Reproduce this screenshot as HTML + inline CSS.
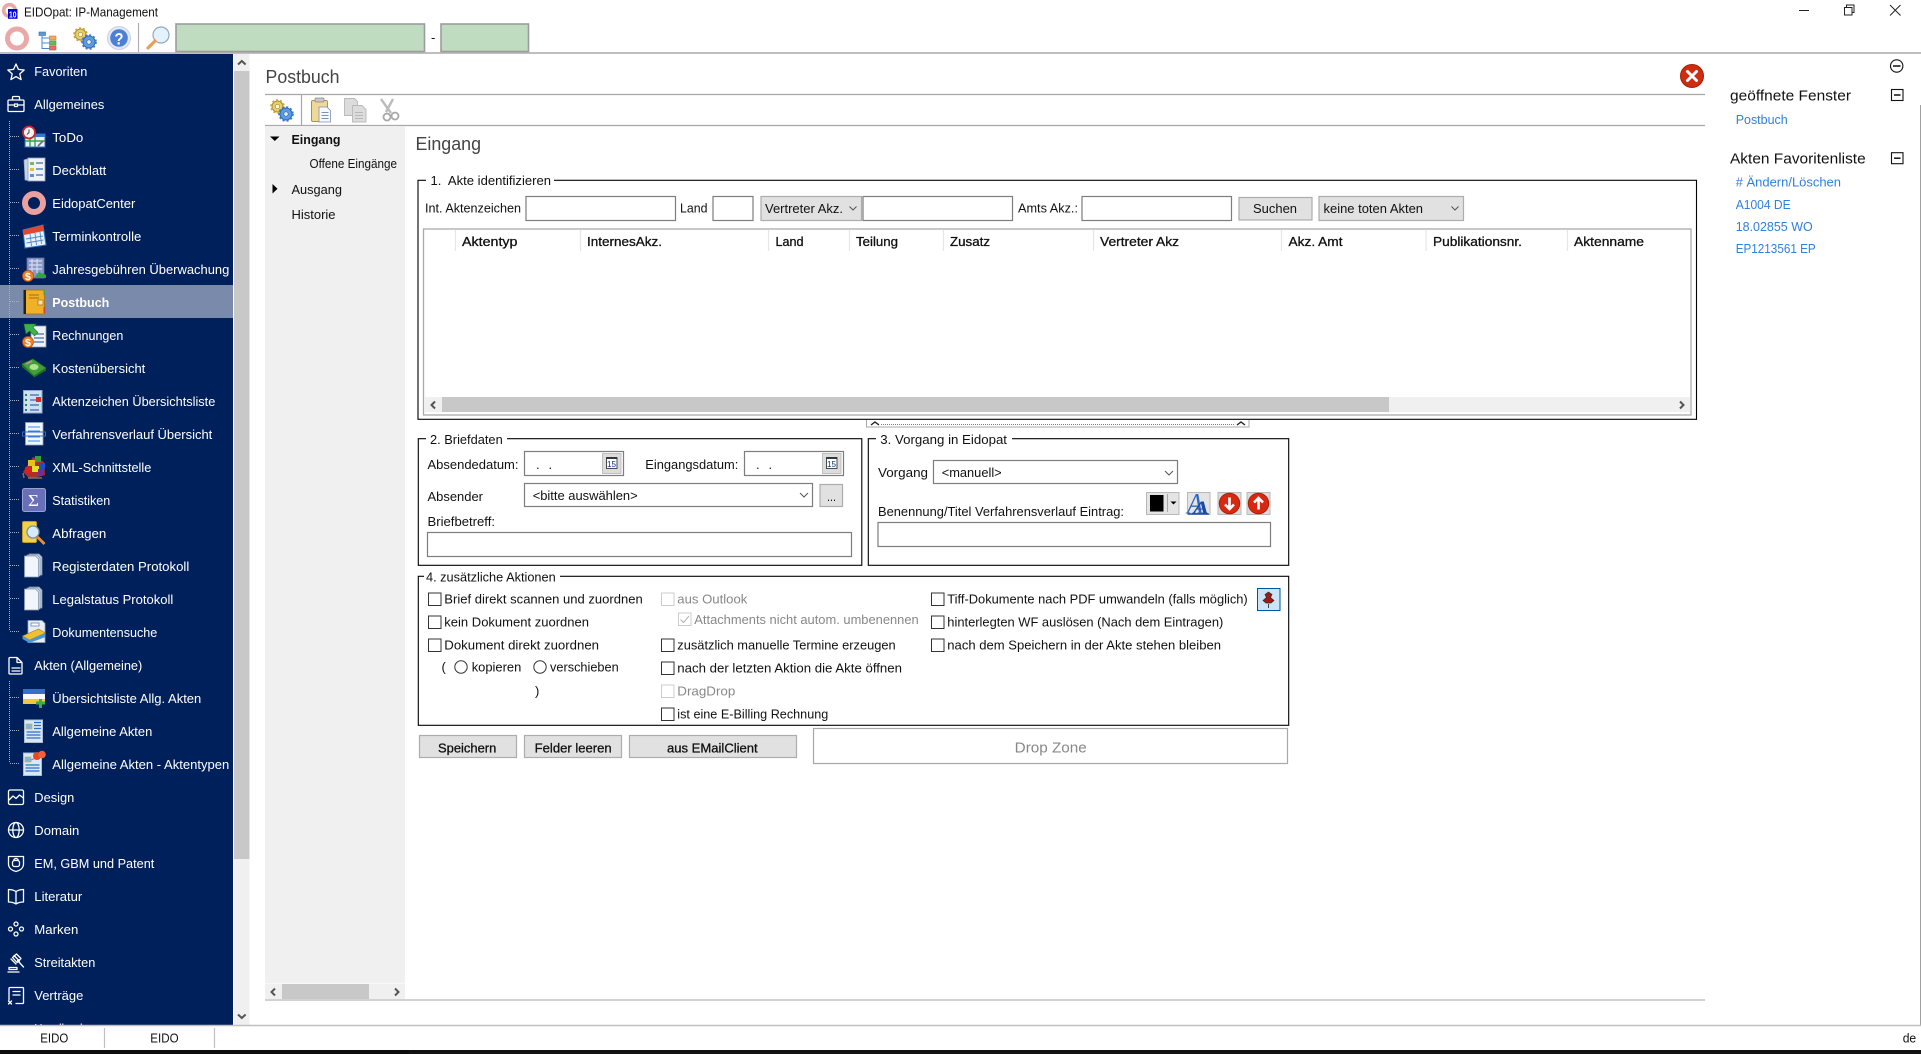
<!DOCTYPE html>
<html lang="de"><head><meta charset="utf-8"><title>EIDOpat: IP-Management</title>
<style>
html,body{margin:0;padding:0;background:#fff;overflow:hidden}
svg{display:block;font-family:"Liberation Sans",sans-serif;font-size:13px}
text{fill:#111;white-space:pre}
.w text,text.w{fill:#fff}
.b{stroke:#111;stroke-width:.3}
.g{fill:#888}
.l{fill:#2f7fe0}
.h{font-size:18px;fill:#444}
.s{font-size:15px}
.i{fill:#fff;stroke:#7d7d7d;stroke-width:1.2}
.btn{fill:#e1e1e1;stroke:#adadad;stroke-width:1.2}
.f{fill:none;stroke:#000;stroke-width:1.1}
.c{fill:#fff;stroke:#333;stroke-width:1}
.d{fill:#fff;stroke:#ccc;stroke-width:1}
.lw{fill:none;stroke:#fff;stroke-width:1.3;stroke-linejoin:round;stroke-linecap:round}
.chev{fill:none;stroke:#555;stroke-width:1}
.arr{fill:none;stroke:#555;stroke-width:2}
</style></head><body>
<svg xmlns="http://www.w3.org/2000/svg" width="1921" height="1054" viewBox="0 0 1921 1054">
<defs>
<g id="gears">
 <circle cx="7.5" cy="7.5" r="5.5" fill="#e8cc70" stroke="#a08a30" stroke-width="1"/><circle cx="7.5" cy="7.5" r="6.3" fill="none" stroke="#c8a840" stroke-width="2" stroke-dasharray="2 2"/><circle cx="7.5" cy="7.5" r="2.2" fill="#fff6d0" stroke="#a08a30" stroke-width=".7"/>
 <circle cx="16" cy="15" r="6" fill="#5c9ce0" stroke="#2c60a8" stroke-width="1"/><circle cx="16" cy="15" r="6.8" fill="none" stroke="#3c78c8" stroke-width="2" stroke-dasharray="2 2"/><circle cx="16" cy="15" r="2.2" fill="#e4f0fc" stroke="#2c60a8" stroke-width=".7"/>
</g>
<g id="pages">
 <path d="M6 1h10l3 3v18H6z" fill="#b8c8dc" stroke="#8898b0" stroke-width=".7"/><path d="M4 2h10l3 3v18H4z" fill="#d8e4f0" stroke="#8898b0" stroke-width=".7"/><path d="M1.500 3h11l3 3v18h-14z" fill="#f2f6fc" stroke="#8898b0" stroke-width=".8"/>
</g>
<g id="cal">
 <rect x=".5" y=".5" width="18.500" height="20" fill="#dcdcdc" stroke="#c0c0c0"/><rect x="4.500" y="4.500" width="10.500" height="11" fill="#fff" stroke="#222" stroke-width=".8"/><rect x="4.500" y="4.500" width="10.500" height="1.400" fill="#222"/>
</g>
<g id="coin"><circle cx="6" cy="6" r="5.500" fill="#f08020" stroke="#b85010" stroke-width=".7"/><text x="3" y="10" font-size="10.500" font-weight="bold" style="fill:#fff">$</text></g>
</defs>

<!-- Title bar -->
<rect width="1921" height="1054" fill="#fff"/>
<circle cx="9.500" cy="10.500" r="5.800" fill="none" stroke="#e8a8a8" stroke-width="3.600"/>
<rect x="8" y="9" width="9.500" height="9.800" fill="#0000e0"/>
<text x="9" y="17.300" font-size="8.500" font-weight="bold" textLength="7.500" lengthAdjust="spacingAndGlyphs" style="fill:#fff">10</text>
<text x="24" y="16.300" textLength="134" lengthAdjust="spacingAndGlyphs">EIDOpat: IP-Management</text>
<path d="M1799 10.500h10" stroke="#222" stroke-width="1"/>
<path d="M1844.500 7.500h7.500v7.500h-7.500zM1846.500 7.500v-2.500h7.500v7.500h-2" fill="none" stroke="#222" stroke-width="1"/>
<path d="M1890 5l10.500 10.500M1900.500 5L1890 15.500" stroke="#222" stroke-width="1"/>

<!-- Toolbar -->
<circle cx="17" cy="38.500" r="9.500" fill="none" stroke="#eaa8a8" stroke-width="5"/>
<g stroke-width=".6">
 <path d="M42 36v12.500h7.500M42 38h7.500M42 43h7.500" fill="none" stroke="#4888d0" stroke-width="1"/>
 <rect x="39" y="32" width="6.500" height="3.500" fill="#5a98dc" stroke="#3870b0"/>
 <rect x="49.500" y="36" width="6.500" height="4" fill="#f0a860" stroke="#c08040"/>
 <rect x="49.500" y="41" width="6.500" height="4" fill="#70b860" stroke="#509040"/>
 <rect x="49.500" y="46" width="6.500" height="4" fill="#e87060" stroke="#b05040"/>
</g>
<use href="#gears" x="73" y="27"/>
<circle cx="119" cy="38" r="11.500" fill="#e2e8f6" stroke="#c8d0e4"/>
<circle cx="119" cy="38" r="8.800" fill="#4c80d4"/>
<text x="114.500" y="44.500" font-size="17" font-weight="bold" textLength="9" lengthAdjust="spacingAndGlyphs" style="fill:#fff">?</text>
<path d="M138.500 23v29" stroke="#b0b0b0" stroke-width="1.200"/>
<circle cx="161" cy="35" r="8" fill="#e4f2fc" stroke="#90a8c4" stroke-width="1.200"/>
<path d="M155 41l-7 7" stroke="#e8a050" stroke-width="3.200" stroke-linecap="round"/>
<rect x="176" y="24" width="248.500" height="27.500" fill="#bfdcc0" stroke="#9c9c9c" stroke-width="1.600"/>
<text x="431" y="42">-</text>
<rect x="441" y="24" width="87.500" height="27.500" fill="#bfdcc0" stroke="#9c9c9c" stroke-width="1.600"/>
<path d="M0 53h1921" stroke="#a8a8a8" stroke-width="1.400"/>

<!-- Sidebar -->
<rect x="0" y="54" width="233" height="972" fill="#00205c"/>
<rect x="0" y="285" width="233" height="33" fill="#7a8aab"/>
<rect x="234" y="54" width="15.500" height="972" fill="#f0f0f0"/>
<rect x="234" y="71" width="15.500" height="788" fill="#c8c8c8"/>
<path d="M238 64.500l3.800-3.500 3.800 3.500" class="arr"/>
<path d="M238 1014.500l3.800 3.500 3.800-3.500" class="arr"/>

<g stroke="#a8b0c4" stroke-width="1" stroke-dasharray="1 1" fill="none">
 <path d="M9.500 121V631M9.500 681V763"/>
 <path d="M10 136.500h9M10 169.500h9M10 202.500h9M10 235.500h9M10 268.500h9M10 301.500h9M10 334.500h9M10 367.500h9M10 400.500h9M10 433.500h9M10 466.500h9M10 499.500h9M10 532.500h9M10 565.500h9M10 598.500h9M10 631.500h9M10 697.500h9M10 730.500h9M10 763.500h9"/>
</g>

<g class="w">
<text x="34.300" y="76" textLength="53" lengthAdjust="spacingAndGlyphs">Favoriten</text>
<text x="34.300" y="109" textLength="70" lengthAdjust="spacingAndGlyphs">Allgemeines</text>
<text x="52.300" y="142" textLength="31" lengthAdjust="spacingAndGlyphs">ToDo</text>
<text x="52.300" y="175" textLength="54" lengthAdjust="spacingAndGlyphs">Deckblatt</text>
<text x="52.300" y="208" textLength="83" lengthAdjust="spacingAndGlyphs">EidopatCenter</text>
<text x="52.300" y="241" textLength="89" lengthAdjust="spacingAndGlyphs">Terminkontrolle</text>
<text x="52.300" y="274" textLength="177" lengthAdjust="spacingAndGlyphs">Jahresgebühren Überwachung</text>
<text x="52.300" y="307" textLength="57" lengthAdjust="spacingAndGlyphs" font-weight="bold">Postbuch</text>
<text x="52.300" y="340" textLength="71" lengthAdjust="spacingAndGlyphs">Rechnungen</text>
<text x="52.300" y="373" textLength="93" lengthAdjust="spacingAndGlyphs">Kostenübersicht</text>
<text x="52.300" y="406" textLength="163" lengthAdjust="spacingAndGlyphs">Aktenzeichen Übersichtsliste</text>
<text x="52.300" y="439" textLength="160" lengthAdjust="spacingAndGlyphs">Verfahrensverlauf Übersicht</text>
<text x="52.300" y="472" textLength="99" lengthAdjust="spacingAndGlyphs">XML-Schnittstelle</text>
<text x="52.300" y="505" textLength="58" lengthAdjust="spacingAndGlyphs">Statistiken</text>
<text x="52.300" y="538" textLength="54" lengthAdjust="spacingAndGlyphs">Abfragen</text>
<text x="52.300" y="571" textLength="137" lengthAdjust="spacingAndGlyphs">Registerdaten Protokoll</text>
<text x="52.300" y="604" textLength="121" lengthAdjust="spacingAndGlyphs">Legalstatus Protokoll</text>
<text x="52.300" y="637" textLength="105" lengthAdjust="spacingAndGlyphs">Dokumentensuche</text>
<text x="34.300" y="670" textLength="108" lengthAdjust="spacingAndGlyphs">Akten (Allgemeine)</text>
<text x="52.300" y="703" textLength="149" lengthAdjust="spacingAndGlyphs">Übersichtsliste Allg. Akten</text>
<text x="52.300" y="736" textLength="100" lengthAdjust="spacingAndGlyphs">Allgemeine Akten</text>
<text x="52.300" y="769" textLength="177" lengthAdjust="spacingAndGlyphs">Allgemeine Akten - Aktentypen</text>
<text x="34.300" y="802" textLength="40" lengthAdjust="spacingAndGlyphs">Design</text>
<text x="34.300" y="835" textLength="45" lengthAdjust="spacingAndGlyphs">Domain</text>
<text x="34.300" y="868" textLength="120" lengthAdjust="spacingAndGlyphs">EM, GBM und Patent</text>
<text x="34.300" y="901" textLength="48" lengthAdjust="spacingAndGlyphs">Literatur</text>
<text x="34.300" y="934" textLength="44" lengthAdjust="spacingAndGlyphs">Marken</text>
<text x="34.300" y="967" textLength="61" lengthAdjust="spacingAndGlyphs">Streitakten</text>
<text x="34.300" y="1000" textLength="49" lengthAdjust="spacingAndGlyphs">Verträge</text>
<text x="34.300" y="1033" textLength="52" lengthAdjust="spacingAndGlyphs">Handbuch</text>
</g>

<!-- top-level line icons -->
<path class="lw" d="M16 64l2.400 5.400 5.800.6-4.400 3.900 1.300 5.700-5.100-3-5.100 3 1.300-5.700-4.400-3.900 5.800-.6z"/>
<g class="lw"><rect x="8" y="100" width="16" height="11.500" rx="1"/><path d="M12.500 100v-2.500q0-1 1-1h5q1 0 1 1v2.500M8 105h6M18 105h6"/><rect x="14.500" y="104" width="3" height="2.500"/></g>
<g class="lw"><path d="M10 657.500h7l5 5v10.500q0 1-1 1H10q-1 0-1-1v-14.500q0-1 1-1zM17 657.500v5h5M12 668h8M12 671h8"/></g>
<g class="lw"><rect x="8.500" y="790" width="15" height="14.500" rx="1.500"/><path d="M9 800l4-4 3 2.500 3.500-3.500 4 3"/></g>
<g class="lw"><circle cx="16" cy="830" r="7.500"/><ellipse cx="16" cy="830" rx="3.200" ry="7.500"/><path d="M8.500 830h15"/></g>
<g class="lw"><path d="M8.500 856.500h15v7.500c0 4-3.500 6.500-7.500 7.500-4-1-7.500-3.500-7.500-7.500z"/><rect x="12.500" y="860.500" width="7" height="6" rx="2"/><path d="M14 860.500v-1q2-2 4 0v1"/></g>
<g class="lw"><path d="M16 891.500q-3-2-7.500-2v12.500q4.500 0 7.500 2 3-2 7.500-2v-12.500q-4.500 0-7.500 2zM16 891.500v12.500"/></g>
<g class="lw"><circle cx="16" cy="924" r="2"/><circle cx="16" cy="934" r="2"/><circle cx="10.500" cy="929" r="2"/><circle cx="21.500" cy="929" r="2"/></g>
<g class="lw"><path d="M14 955.500l5.500 5.500M11 959l5 5M12.500 957.500l4-3.500 4.500 4.500-4 4zM17.500 960.500l6 6.500M9 967.500h8v2H9zM8 972h11"/></g>
<g class="lw"><path d="M9 1000v-11.500q0-1 1-1h12.500q1 0 1 1V1003M13 991.500h7M13 995h7M8.500 1001l3 3M11.500 1001l-3 3M16 1003.500h7"/></g>
<path class="lw" d="M8 1033l8-6 8 6"/>

<!-- tree item icons -->
<g>
 <rect x="25" y="134" width="20" height="13" fill="#e8f2fc" stroke="#2c6cc0"/><rect x="25" y="134" width="20" height="3" fill="#3078d0"/><path d="M30 137v10M35 137v10M25 141h20" stroke="#38a048" stroke-width="1.400"/>
 <circle cx="29" cy="132.500" r="6" fill="#f4f4f4" stroke="#d02828" stroke-width="1.800"/><path d="M29 129.500v3l-2 2" stroke="#444" stroke-width="1" fill="none"/>
 <path d="M38 146l5-5" stroke="#707070" stroke-width="1.600"/>
</g>
<g>
 <path d="M24 160l6-2v23l-5-1z" fill="#c8d4e4" stroke="#90a0b8" stroke-width=".7"/>
 <rect x="28" y="158" width="17" height="23" fill="#eef4fa" stroke="#90a0b8" stroke-width=".8"/>
 <path d="M30 162h4v3h-4z" fill="#80b860"/><path d="M36 163h7M36 169h7M36 175h7" stroke="#6080b0" stroke-width="1.500"/><path d="M30 168h4v3h-4z" fill="#e0c040"/><path d="M30 174h4v3h-4z" fill="#6090d0"/>
</g>
<circle cx="34" cy="203" r="9" fill="none" stroke="#e8a0a0" stroke-width="6"/>
<g>
 <path d="M23 230l20-5 3 20-21 3z" fill="#e8f2fc" stroke="#2c78c8"/><path d="M23 230l20-5 1 6-20 4z" fill="#e04830"/>
 <path d="M26 239l17-3M26.500 243l17-3M30 234l1.500 12M35 233l1.500 12M40 232l1.500 12" stroke="#5088c8" stroke-width=".9"/>
</g>
<g>
 <rect x="27" y="258" width="17" height="20" fill="#8898c8" stroke="#687098" stroke-width=".8"/>
 <path d="M29 261h13M29 265h13M29 269h13M32 259v14M37 259v14" stroke="#d4dcf4" stroke-width="1.200"/>
 <path d="M34 278h12v-3l-7-3z" fill="#38a040"/>
 <use href="#coin" x="22" y="270"/>
</g>
<g>
 <rect x="24" y="290" width="20.500" height="24" fill="#f0b028" stroke="#a87010" stroke-width=".8"/>
 <rect x="23.500" y="290" width="2.500" height="24" fill="#202020"/>
 <path d="M29 295h10M29 298h10" stroke="#a07010"/><rect x="38" y="300" width="5" height="5" fill="#f8e0a0" stroke="#a07010" stroke-width=".7"/>
 <rect x="43.500" y="290" width="1.600" height="5" fill="#50a050"/><rect x="43.500" y="307" width="1.600" height="6" fill="#d04040"/>
</g>
<g>
 <rect x="31" y="326" width="15" height="21" fill="#eef3fa" stroke="#8898b0" stroke-width=".8"/>
 <path d="M34 334h10M34 338h10M34 342h10" stroke="#4870a8" stroke-width="1.300"/>
 <path d="M24 324h12l-3 3.500 5 5-3.500 3.500-5-5-3.500 3z" fill="#40b048" stroke="#207828" stroke-width=".6"/>
 <use href="#coin" x="22" y="336"/>
</g>
<g>
 <path d="M22 364l11-5 13 9-12 8z" fill="#3ea038" stroke="#287020" stroke-width=".7"/>
 <path d="M22 364v3l12 10v-1zM46 368v2.500l-12 7v-2z" fill="#1f7020"/>
 <ellipse cx="34" cy="367" rx="4.500" ry="3" fill="#b0e090"/><path d="M26 364l6-3" stroke="#c09090" stroke-width="2"/>
</g>
<g>
 <rect x="23.500" y="390.500" width="18.500" height="22.500" fill="#cfe0f4" stroke="#90a8c8"/>
 <path d="M30 395h9M30 400h6M30 405h9M30 410h9" stroke="#1848a8" stroke-width="1"/>
 <path d="M26 394v2M26 399v2M26 404v2M26 409v2" stroke="#109040" stroke-width="2"/>
 <rect x="36" y="397" width="5" height="5" fill="#e02828"/>
</g>
<g>
 <rect x="25.500" y="422.500" width="17.500" height="22.500" fill="#f0f6ff" stroke="#90a0b8" stroke-width=".8"/>
 <path d="M28 427h12M28 431h12M28 437h12M28 441h12" stroke="#3c8ce0" stroke-width="1.100"/>
 <rect x="22.500" y="432" width="23" height="4" fill="none" stroke="#3868b8" stroke-width="1"/>
</g>
<g>
 <path d="M23 472l10-15 11 5 1 13-15 4z" fill="#a83030"/>
 <path d="M28 460h7v6h-7z" fill="#e8c020"/><path d="M35 456h6v6h-6z" fill="#30a040"/><path d="M39 463h6v6h-6z" fill="#2050c0"/><path d="M32 466h7v6h-7z" fill="#e8e020"/><path d="M25 467h6v6h-6z" fill="#d82020"/><path d="M38 469h6v6h-6z" fill="#703090"/>
 <path d="M24 478l-1-5M28 478h14" stroke="#807060" stroke-width="1.500"/>
</g>
<g>
 <rect x="22.500" y="488.500" width="23" height="23" rx="2" fill="#6a70b8" stroke="#9aa0d0"/>
 <text x="28" y="506" font-size="17" font-family="Liberation Serif" textLength="11" lengthAdjust="spacingAndGlyphs" style="fill:#fff">Σ</text>
</g>
<g>
 <path d="M22.500 523q0-1.500 1.500-1.500h11q1.500 0 1.500 1.500v18q0 1.500-1.500 1.500H24q-1.500 0-1.500-1.500z" fill="#f0d050" stroke="#c09820"/>
 <circle cx="33" cy="532" r="6" fill="#d8eaf8" stroke="#7890a8" stroke-width="1.300"/>
 <path d="M37.500 537l7 7" stroke="#e89030" stroke-width="2.800"/>
</g>
<use href="#pages" x="23" y="553"/>
<use href="#pages" x="23" y="586"/>
<g>
 <path d="M28 620.500h14l3 3v19H28z" fill="#e8eef6" stroke="#90a0b8" stroke-width=".8"/>
 <rect x="31" y="623" width="8" height="3" fill="#fff" stroke="#6088b8" stroke-width=".8"/>
 <path d="M22.500 636l16-7 7 4-16 7z" fill="#f0c030" stroke="#a08020" stroke-width=".6"/>
 <path d="M22.500 636v3l7 4 16-6v-4l-16 7z" fill="#4898d8"/>
</g>
<g>
 <rect x="23" y="689" width="22" height="5" fill="#3470c8"/>
 <rect x="23" y="694" width="22" height="5" fill="#f8f8ff"/>
 <rect x="23" y="699" width="22" height="5" fill="#f0c838"/>
 <path d="M36 703h9M40.500 699v9" stroke="#38b048" stroke-width="3"/>
</g>
<g>
 <rect x="24.500" y="720" width="18" height="22.500" fill="#d8e8f8" stroke="#a8bcd4"/>
 <rect x="26" y="724" width="6" height="5" fill="#78b8e8" stroke="#d0b040" stroke-width=".7"/>
 <path d="M34 722.500h7M34 725.500h7M34 728.500h7M26.500 732h14M26.500 735h14M26.500 738h14" stroke="#2c70c8" stroke-width="1.200"/>
</g>
<g>
 <rect x="23.500" y="753" width="18" height="22.500" fill="#d8e8f8" stroke="#a8bcd4"/>
 <rect x="25" y="757" width="6" height="5" fill="#78b8e8" stroke="#d0b040" stroke-width=".7"/>
 <path d="M25.500 765h14M25.500 768h14M25.500 771h14" stroke="#2c70c8" stroke-width="1.200"/>
 <path d="M31 760l7-3" stroke="#888" stroke-width="1"/>
 <circle cx="37" cy="756" r="4" fill="#e84820"/><circle cx="42" cy="754.500" r="3.800" fill="#f06040"/>
</g>

<!-- Postbuch header -->
<text class="h" x="265.500" y="83" textLength="74" lengthAdjust="spacingAndGlyphs">Postbuch</text>
<circle cx="1692" cy="76" r="11.500" fill="#d02c10" stroke="#9c2008"/>
<path d="M1687.500 71.500l9 9M1696.500 71.500l-9 9" stroke="#fff" stroke-width="3" stroke-linecap="round"/>
<path d="M265 94.500h1440M265 125.500h1440" stroke="#a8a8a8" stroke-width="1.200"/>
<path d="M301.500 95v30" stroke="#a8a8a8" stroke-width="1.200"/>
<use href="#gears" x="270" y="99"/>
<g>
 <rect x="311.500" y="100.500" width="16" height="21" rx="1.500" fill="#f0d898" stroke="#b09050"/>
 <rect x="315" y="98" width="9" height="4" rx="1" fill="#c8c8c8" stroke="#888" stroke-width=".7"/>
 <path d="M319 107h8l3.500 3.500v11.500H319z" fill="#f4f8ff" stroke="#8090b0" stroke-width=".8"/>
 <path d="M321.500 112.500h7M321.500 115.500h7M321.500 118.500h7" stroke="#8090b0"/>
</g>
<g fill="#dcdcdc" stroke="#b8b8b8" stroke-width=".9">
 <path d="M344.500 98.500h10l3 3v14h-13z"/>
 <path d="M352.500 105.500h9.500l4 4v12.500h-13.500z"/>
 <path d="M355 112.500h8M355 115.500h8M355 118.500h8" fill="none"/>
</g>
<g fill="none" stroke="#a8a8a8">
 <path d="M381 99l10 14M393 99l-7 13" stroke-width="2.400" stroke="#bcbcbc"/>
 <circle cx="387" cy="117" r="3.500" stroke-width="1.800"/><circle cx="395" cy="116" r="3.500" stroke-width="1.800"/>
</g>

<!-- Left nav -->
<rect x="265" y="126" width="140" height="857.500" fill="#f0f0f0"/>
<rect x="265" y="984" width="140" height="15" fill="#f0f0f0"/>
<rect x="282" y="984" width="87" height="15" fill="#c8c8c8"/>
<path d="M275 988.500l-3.500 3.500 3.500 3.500M395 988.500l3.500 3.500-3.500 3.500" class="arr"/>
<path d="M265 1000h1440" stroke="#b8b8b8" stroke-width="1.200"/>
<path d="M270 136.500h9.500l-4.700 4.500z" fill="#000"/>
<path d="M272.500 184v9.500l5-4.700z" fill="#000"/>
<text x="291.500" y="144" textLength="49" lengthAdjust="spacingAndGlyphs" font-weight="bold">Eingang</text>
<text x="309.500" y="168" textLength="87.500" lengthAdjust="spacingAndGlyphs">Offene Eingänge</text>
<text x="291.500" y="194" textLength="50.500" lengthAdjust="spacingAndGlyphs">Ausgang</text>
<text x="291.500" y="219" textLength="44" lengthAdjust="spacingAndGlyphs">Historie</text>

<text class="h" x="415.500" y="150" textLength="65.500" lengthAdjust="spacingAndGlyphs">Eingang</text>

<!-- Group 1 -->
<rect class="f" x="418" y="180.300" width="1278.500" height="239"/>
<rect x="426" y="175" width="128" height="10" fill="#fff"/>
<text x="430.500" y="185" textLength="120.500" lengthAdjust="spacingAndGlyphs">1.  Akte identifizieren</text>
<text x="425" y="212.500" textLength="96" lengthAdjust="spacingAndGlyphs">Int. Aktenzeichen</text>
<rect class="i" x="526" y="196.500" width="149.500" height="24"/>
<text x="680" y="212.500" textLength="27.500" lengthAdjust="spacingAndGlyphs">Land</text>
<rect class="i" x="713" y="196.500" width="40" height="24"/>
<rect class="btn" x="761" y="196.500" width="100.500" height="24"/>
<text x="765" y="213" textLength="78" lengthAdjust="spacingAndGlyphs">Vertreter Akz.</text>
<path class="chev" d="M849.500 206.500l3.500 3.500 3.500-3.500"/>
<rect class="i" x="863" y="196.500" width="149.500" height="24"/>
<text x="1018" y="212.500" textLength="60" lengthAdjust="spacingAndGlyphs">Amts Akz.:</text>
<rect class="i" x="1082" y="196.500" width="149.500" height="24"/>
<rect class="btn" x="1239" y="197.500" width="73" height="22.500"/>
<text x="1253" y="213" textLength="44" lengthAdjust="spacingAndGlyphs">Suchen</text>
<rect class="btn" x="1319" y="196.500" width="144.500" height="24"/>
<text x="1323.500" y="213" textLength="99.500" lengthAdjust="spacingAndGlyphs">keine toten Akten</text>
<path class="chev" d="M1451.500 206.500l3.500 3.500 3.500-3.500"/>

<rect x="423.500" y="229" width="1267.500" height="186" fill="#fff" stroke="#aaaaaa" stroke-width="1.300"/>
<path d="M455.500 230v21M580.500 230v21M768.500 230v21M849.500 230v21M943.500 230v21M1093.500 230v21M1281.500 230v21M1426 230v21M1567.500 230v21" stroke="#e6e6e6" stroke-width="1.200"/>
<g class="hd">
<text class="b" x="462" y="246" textLength="55.500" lengthAdjust="spacingAndGlyphs">Aktentyp</text>
<text class="b" x="587" y="246" textLength="75" lengthAdjust="spacingAndGlyphs">InternesAkz.</text>
<text class="b" x="775.500" y="246" textLength="28" lengthAdjust="spacingAndGlyphs">Land</text>
<text class="b" x="856" y="246" textLength="42" lengthAdjust="spacingAndGlyphs">Teilung</text>
<text class="b" x="950" y="246" textLength="40" lengthAdjust="spacingAndGlyphs">Zusatz</text>
<text class="b" x="1100" y="246" textLength="79" lengthAdjust="spacingAndGlyphs">Vertreter Akz</text>
<text class="b" x="1288.500" y="246" textLength="54" lengthAdjust="spacingAndGlyphs">Akz. Amt</text>
<text class="b" x="1433" y="246" textLength="89" lengthAdjust="spacingAndGlyphs">Publikationsnr.</text>
<text class="b" x="1574" y="246" textLength="70" lengthAdjust="spacingAndGlyphs">Aktenname</text>
</g>
<rect x="424" y="397" width="1266.500" height="15" fill="#f0f0f0"/>
<rect x="442" y="397" width="947" height="15" fill="#c8c8c8"/>
<path d="M435 401.500l-3.500 3.500 3.500 3.500M1680 401.500l3.500 3.500-3.500 3.500" class="arr"/>

<!-- splitter -->
<path d="M866.500 420v7h382.500v-7" fill="none" stroke="#a8a8a8" stroke-width="1"/>
<path d="M871 425l4-3 4 3M1237 425l4-3 4 3" fill="none" stroke="#222" stroke-width="1.400"/>
<path d="M881 424.500H1235" stroke="#3a8ce0" stroke-width="1" stroke-dasharray="1 1"/>

<!-- Group 2 -->
<rect class="f" x="418.300" y="438.700" width="443.500" height="126.600"/>
<rect x="426" y="433" width="81" height="11" fill="#fff"/>
<text x="430" y="443.800" textLength="72.700" lengthAdjust="spacingAndGlyphs">2. Briefdaten</text>
<text x="427.500" y="469" textLength="91" lengthAdjust="spacingAndGlyphs">Absendedatum:</text>
<rect class="i" x="524.500" y="451.500" width="99" height="24"/>
<text x="536" y="469">.</text><text x="548.500" y="469">.</text>
<use href="#cal" x="602" y="453"/>
<text x="607" y="467" font-size="8" textLength="9" lengthAdjust="spacingAndGlyphs" style="fill:#003080">15</text>
<text x="645.300" y="469" textLength="93" lengthAdjust="spacingAndGlyphs">Eingangsdatum:</text>
<rect class="i" x="744.500" y="451.500" width="99" height="24"/>
<text x="756" y="469">.</text><text x="768.500" y="469">.</text>
<use href="#cal" x="822" y="453"/>
<text x="827" y="467" font-size="8" textLength="9" lengthAdjust="spacingAndGlyphs" style="fill:#003080">15</text>
<text x="427.500" y="501" textLength="55.500" lengthAdjust="spacingAndGlyphs">Absender</text>
<rect class="i" x="524.500" y="483.500" width="288" height="23"/>
<text x="532.700" y="500" textLength="105" lengthAdjust="spacingAndGlyphs">&lt;bitte auswählen&gt;</text>
<path class="chev" d="M800 493l4 4 4-4"/>
<rect class="btn" x="820" y="484.500" width="22.500" height="22"/>
<text x="827" y="501" textLength="9" lengthAdjust="spacingAndGlyphs">...</text>
<text x="427.500" y="526" textLength="67.500" lengthAdjust="spacingAndGlyphs">Briefbetreff:</text>
<rect class="i" x="427.500" y="532.500" width="424" height="24"/>

<!-- Group 3 -->
<rect class="f" x="868.300" y="438.700" width="420.400" height="126.600"/>
<rect x="876" y="433" width="136" height="11" fill="#fff"/>
<text x="880.300" y="443.800" textLength="126.700" lengthAdjust="spacingAndGlyphs">3. Vorgang in Eidopat</text>
<text x="878" y="477" textLength="50" lengthAdjust="spacingAndGlyphs">Vorgang</text>
<rect class="i" x="933.500" y="460.500" width="244" height="23"/>
<text x="941.700" y="477" textLength="60" lengthAdjust="spacingAndGlyphs">&lt;manuell&gt;</text>
<path class="chev" d="M1165 471l4 4 4-4"/>
<text x="878" y="516" textLength="246" lengthAdjust="spacingAndGlyphs">Benennung/Titel Verfahrensverlauf Eintrag:</text>
<rect x="1146.500" y="492.500" width="32.500" height="22" fill="#e4e4e4" stroke="#b8b8b8"/>
<rect x="1150" y="495" width="13.500" height="16.500" fill="#000"/>
<path d="M1167.500 494v18" stroke="#a8a8a8"/>
<path d="M1170.500 501.500h6l-3 3z" fill="#000"/>
<rect x="1187.500" y="492.500" width="22.500" height="22" fill="#e4e4e4" stroke="#b8b8b8"/>
<text x="1187" y="513.500" font-size="30" font-style="italic" font-family="Liberation Serif" textLength="16" lengthAdjust="spacingAndGlyphs" style="fill:#2c68c8">A</text>
<text x="1193" y="513.500" font-size="18" font-weight="bold" font-style="italic" font-family="Liberation Serif" textLength="16" lengthAdjust="spacingAndGlyphs" style="fill:#1c48a8">A</text>
<path d="M1188 514h21" stroke="#1c48a8" stroke-width="1.200"/>
<rect x="1218" y="492.500" width="23" height="22" fill="#dcdcdc" stroke="#b8b8b8"/>
<circle cx="1229.500" cy="503.500" r="10.300" fill="#d82810" stroke="#a01c08" stroke-width=".8"/>
<path d="M1229.500 497.500v11M1225 504.500l4.500 4.500 4.500-4.500" fill="none" stroke="#fff" stroke-width="2.600"/>
<rect x="1247" y="492.500" width="23" height="22" fill="#dcdcdc" stroke="#b8b8b8"/>
<circle cx="1258.500" cy="503.500" r="10.300" fill="#d82810" stroke="#a01c08" stroke-width=".8"/>
<path d="M1258.500 509.500v-11M1254 502.500l4.500-4.500 4.500 4.500" fill="none" stroke="#fff" stroke-width="2.600"/>
<rect class="i" x="878" y="522.500" width="392.500" height="24"/>

<!-- Group 4 -->
<rect class="f" x="418.300" y="576.300" width="870.400" height="149"/>
<rect x="424" y="570" width="136" height="12" fill="#fff"/>
<text x="426" y="581.700" textLength="129.700" lengthAdjust="spacingAndGlyphs">4. zusätzliche Aktionen</text>

<rect class="c" x="428.500" y="593" width="12.500" height="12.500"/>
<text x="444.300" y="603.700" textLength="198.400" lengthAdjust="spacingAndGlyphs">Brief direkt scannen und zuordnen</text>
<rect class="c" x="428.500" y="616" width="12.500" height="12.500"/>
<text x="444.300" y="626.700" textLength="144.700" lengthAdjust="spacingAndGlyphs">kein Dokument zuordnen</text>
<rect class="c" x="428.500" y="639" width="12.500" height="12.500"/>
<text x="444.300" y="649.700" textLength="154.700" lengthAdjust="spacingAndGlyphs">Dokument direkt zuordnen</text>
<text x="441.500" y="671.500">(</text>
<circle cx="461" cy="667" r="6.200" fill="#fff" stroke="#333"/>
<text x="471.700" y="671.500" textLength="49.600" lengthAdjust="spacingAndGlyphs">kopieren</text>
<circle cx="540" cy="667" r="6.200" fill="#fff" stroke="#333"/>
<text x="550" y="671.500" textLength="68.700" lengthAdjust="spacingAndGlyphs">verschieben</text>
<text x="535" y="695.500">)</text>

<rect class="d" x="661.500" y="593" width="12.500" height="12.500"/>
<text class="g" x="677.300" y="603.700" textLength="70" lengthAdjust="spacingAndGlyphs">aus Outlook</text>
<rect class="d" x="678.500" y="613" width="12.500" height="12.500"/>
<path d="M680.500 619.500l3 3 5.500-6.500" fill="none" stroke="#b0b0b0" stroke-width="1"/>
<text class="g" x="694.300" y="624" textLength="224.400" lengthAdjust="spacingAndGlyphs">Attachments nicht autom. umbenennen</text>
<rect class="c" x="661.500" y="639" width="12.500" height="12.500"/>
<text x="677.300" y="649.700" textLength="218.400" lengthAdjust="spacingAndGlyphs">zusätzlich manuelle Termine erzeugen</text>
<rect class="c" x="661.500" y="662" width="12.500" height="12.500"/>
<text x="677.300" y="672.700" textLength="224.700" lengthAdjust="spacingAndGlyphs">nach der letzten Aktion die Akte öffnen</text>
<rect class="d" x="661.500" y="685" width="12.500" height="12.500"/>
<text class="g" x="677.300" y="695.700" textLength="58" lengthAdjust="spacingAndGlyphs">DragDrop</text>
<rect class="c" x="661.500" y="708" width="12.500" height="12.500"/>
<text x="677.300" y="718.700" textLength="151" lengthAdjust="spacingAndGlyphs">ist eine E-Billing Rechnung</text>

<rect class="c" x="931.500" y="593" width="12.500" height="12.500"/>
<text x="947.300" y="603.700" textLength="300.400" lengthAdjust="spacingAndGlyphs">Tiff-Dokumente nach PDF umwandeln (falls möglich)</text>
<rect class="c" x="931.500" y="616" width="12.500" height="12.500"/>
<text x="947.300" y="626.700" textLength="276" lengthAdjust="spacingAndGlyphs">hinterlegten WF auslösen (Nach dem Eintragen)</text>
<rect class="c" x="931.500" y="639" width="12.500" height="12.500"/>
<text x="947.300" y="649.700" textLength="273.700" lengthAdjust="spacingAndGlyphs">nach dem Speichern in der Akte stehen bleiben</text>

<rect x="1257.500" y="588.500" width="22.500" height="22" fill="#cce4f7" stroke="#005499" stroke-width="1"/>
<path d="M1268.500 592l3.500 2.500-1.500 3 3.500 3-3 2.500h-5l-3-2.500 3.500-3-1.500-3z" fill="#a01818" stroke="#203820" stroke-width=".7"/>
<path d="M1268.500 604v4" stroke="#444" stroke-width="1"/>

<!-- bottom buttons -->
<rect class="btn" x="419.500" y="735.500" width="97" height="22"/>
<text class="b" x="438" y="752.300" textLength="58.300" lengthAdjust="spacingAndGlyphs">Speichern</text>
<rect class="btn" x="524.500" y="735.500" width="97" height="22"/>
<text class="b" x="534.700" y="752.300" textLength="77" lengthAdjust="spacingAndGlyphs">Felder leeren</text>
<rect class="btn" x="629.500" y="735.500" width="167" height="22"/>
<text class="b" x="667" y="752.300" textLength="90.700" lengthAdjust="spacingAndGlyphs">aus EMailClient</text>
<rect x="813.500" y="728.500" width="474" height="35" fill="#fff" stroke="#a8a8a8" stroke-width="1.200"/>
<text class="s g" x="1014.700" y="752.700" textLength="72" lengthAdjust="spacingAndGlyphs">Drop Zone</text>

<!-- Right panel -->
<circle cx="1896.700" cy="66" r="6.200" fill="none" stroke="#111" stroke-width="1.100"/>
<path d="M1893 66h7.500" stroke="#111" stroke-width="1.500"/>
<text class="s" x="1730" y="100.500" textLength="121" lengthAdjust="spacingAndGlyphs">geöffnete Fenster</text>
<rect x="1891.500" y="89.500" width="11.500" height="11" fill="#fff" stroke="#111" stroke-width="1.100"/>
<path d="M1894 95h6.500" stroke="#111" stroke-width="1.500"/>
<text class="l" x="1735.700" y="124" textLength="52" lengthAdjust="spacingAndGlyphs">Postbuch</text>
<text class="s" x="1730" y="163.500" textLength="135.700" lengthAdjust="spacingAndGlyphs">Akten Favoritenliste</text>
<rect x="1891.500" y="152.700" width="11.500" height="11" fill="#fff" stroke="#111" stroke-width="1.100"/>
<path d="M1894 158.200h6.500" stroke="#111" stroke-width="1.500"/>
<text class="l" x="1735.700" y="186.700" textLength="105.300" lengthAdjust="spacingAndGlyphs"># Ändern/Löschen</text>
<text class="l" x="1735.700" y="209" textLength="55" lengthAdjust="spacingAndGlyphs">A1004 DE</text>
<text class="l" x="1735.700" y="231" textLength="77" lengthAdjust="spacingAndGlyphs">18.02855 WO</text>
<text class="l" x="1735.700" y="253" textLength="80" lengthAdjust="spacingAndGlyphs">EP1213561 EP</text>
<path d="M1920.500 105V1028" stroke="#a0a0a0" stroke-width="1"/>

<!-- Status bar -->
<rect x="0" y="1025.500" width="1921" height="25" fill="#fff"/>
<path d="M0 1025.500h1921" stroke="#c0c0c0" stroke-width="1.400"/>
<text x="40.300" y="1042.300" textLength="28" lengthAdjust="spacingAndGlyphs">EIDO</text>
<path d="M104.500 1028v20M214.500 1028v20" stroke="#c0c0c0" stroke-width="1.200"/>
<text x="150.300" y="1042.300" textLength="28.300" lengthAdjust="spacingAndGlyphs">EIDO</text>
<text x="1902.700" y="1042.500" textLength="13.500" lengthAdjust="spacingAndGlyphs">de</text>
<rect x="0" y="1050" width="1921" height="4" fill="#0c0c0c"/>
<rect x="409" y="1050" width="1512" height="4" fill="#111"/>
</svg>
</body></html>
